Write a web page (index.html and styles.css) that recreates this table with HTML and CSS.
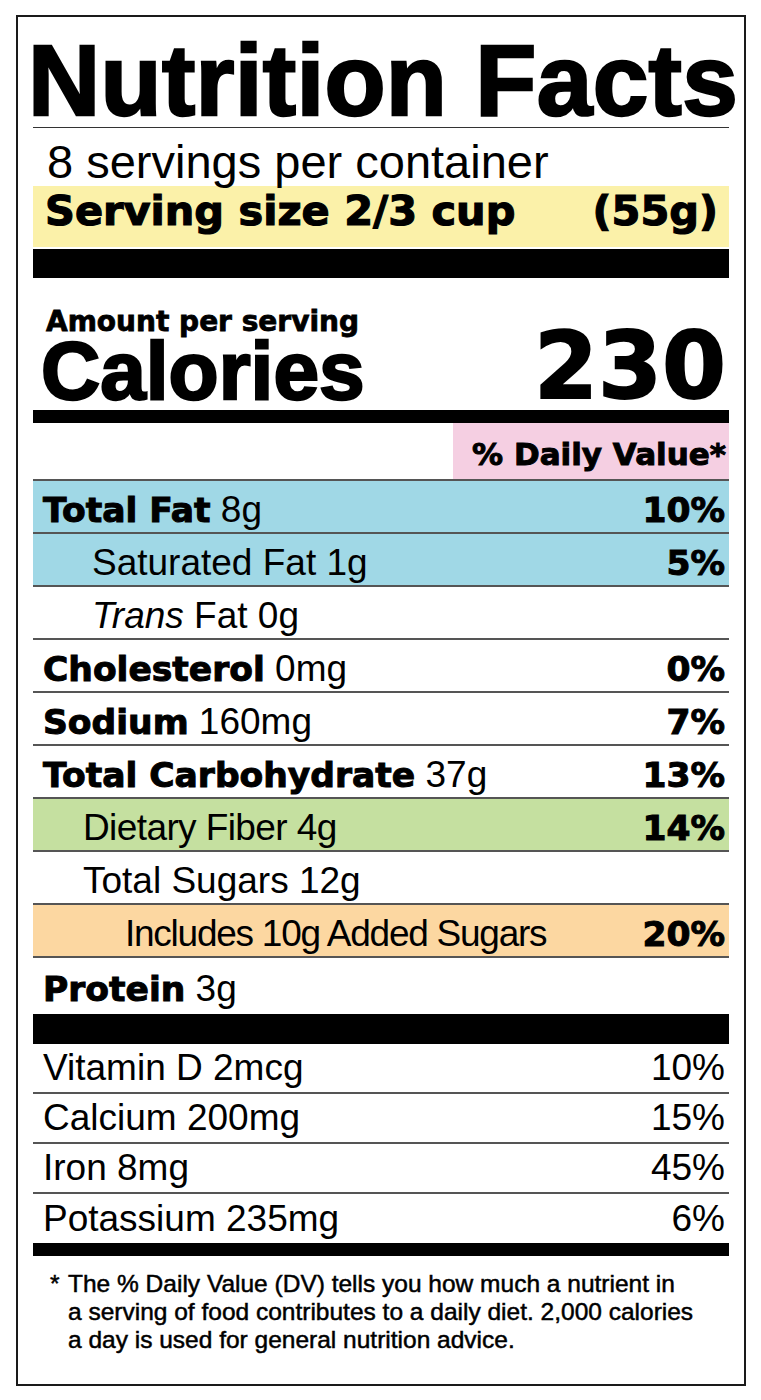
FILE: index.html
```html
<!DOCTYPE html>
<html lang="en">
<head>
<meta charset="utf-8">
<title>Nutrition Facts</title>
<link rel="stylesheet" href="styles.css">
</head>
<body>
<div class="label">
  <div class="title-wrap"><h1 class="title">Nutrition Facts</h1></div>
  <div class="servings">8 servings per container</div>
  <div class="serving-size"><span>Serving size 2/3 cup</span><span>(55g)</span></div>
  <div class="bar bar-thick"></div>
  <div class="calories">
    <div class="cal-left">
      <div class="amount">Amount per serving</div>
      <div class="cal-label">Calories</div>
    </div>
    <div class="cal-value">230</div>
  </div>
  <div class="bar bar-medium"></div>
  <div class="dv-head"><span class="dv-box">% Daily Value*</span></div>

  <div class="row blue"><span class="name"><b>Total Fat</b> 8g</span><b class="pct">10%</b></div>
  <div class="row blue sub-fat"><span class="name">Saturated Fat 1g</span><b class="pct">5%</b></div>
  <div class="row sub-fat"><span class="name"><i>Trans</i> Fat 0g</span></div>
  <div class="row"><span class="name"><b>Cholesterol</b> 0mg</span><b class="pct">0%</b></div>
  <div class="row"><span class="name"><b>Sodium</b> 160mg</span><b class="pct">7%</b></div>
  <div class="row"><span class="name"><b>Total Carbohydrate</b> 37g</span><b class="pct">13%</b></div>
  <div class="row green sub-carb"><span class="name tight">Dietary Fiber 4g</span><b class="pct">14%</b></div>
  <div class="row sub-carb"><span class="name">Total Sugars 12g</span></div>
  <div class="row orange sub-added"><span class="name tighter">Includes 10g Added Sugars</span><b class="pct">20%</b></div>
  <div class="row row-last"><span class="name"><b>Protein</b> 3g</span></div>

  <div class="bar bar-thick2"></div>

  <div class="vrow"><span>Vitamin D 2mcg</span><span>10%</span></div>
  <div class="vrow"><span>Calcium 200mg</span><span>15%</span></div>
  <div class="vrow"><span>Iron 8mg</span><span>45%</span></div>
  <div class="vrow vrow-last"><span>Potassium 235mg</span><span>6%</span></div>

  <div class="bar bar-medium"></div>

  <div class="footnote">
    <span class="star">*</span>
    <p class="note">The % Daily Value (DV) tells you how much a nutrient in<br>a serving of food contributes to a daily diet. 2,000 calories<br>a day is used for general nutrition advice.</p>
  </div>
</div>
</body>
</html>
```

FILE: styles.css
```css
html, body {
  margin: 0;
  padding: 0;
  background: #ffffff;
}

.label {
  box-sizing: border-box;
  margin: 15px 0 0 16px;
  width: 730px;
  height: 1371px;
  border: 2px solid #1a1a1a;
  padding: 0 15px;
  font-family: "Liberation Sans", Arial, sans-serif;
  color: #000;
}

.title-wrap {
  border-bottom: 1px solid #333;
  padding-top: 16px;
}

.title {
  margin: 0 0 0 -5px;
  font-family: "Liberation Sans", Arial, sans-serif;
  font-weight: 700;
  font-size: 100px;
  line-height: 94px;
  height: 94px;
  letter-spacing: 0.3px;
  white-space: nowrap;
  -webkit-text-stroke: 2.4px #000;
}

.servings {
  height: 58px;
  font-size: 47px;
  line-height: 68px;
  padding-left: 14px;
  white-space: nowrap;
}

.serving-size {
  display: flex;
  justify-content: space-between;
  height: 61px;
  padding: 0 11px 0 12px;
  background: #fbf1a9;
  font-family: "DejaVu Sans", sans-serif;
  font-weight: 700;
  font-size: 41.5px;
  line-height: 50px;
  white-space: nowrap;
  -webkit-text-stroke: 1.2px #000;
}

.bar {
  background: #000;
}

.bar-thick {
  height: 29px;
  margin-top: 2px;
}

.bar-medium {
  height: 13px;
}

.bar-thick2 {
  height: 30px;
}

.calories {
  display: flex;
  justify-content: space-between;
  align-items: flex-end;
  height: 132px;
  box-sizing: border-box;
  padding: 31px 3px 3px 8px;
}

.amount {
  margin-left: 5px;
  font-family: "DejaVu Sans", sans-serif;
  font-weight: 700;
  font-size: 28px;
  line-height: 26px;
  white-space: nowrap;
  -webkit-text-stroke: 0.8px #000;
}

.cal-label {
  font-weight: 700;
  font-size: 82px;
  line-height: 72px;
  -webkit-text-stroke: 2.4px #000;
  white-space: nowrap;
}

.cal-value {
  font-family: "DejaVu Sans", sans-serif;
  font-weight: 700;
  font-size: 92px;
  line-height: 80px;
  -webkit-text-stroke: 1.8px #000;
}

.dv-head {
  display: flex;
  justify-content: flex-end;
  height: 58px;
  box-sizing: border-box;
  border-bottom: 2px solid #555;
}

.dv-box {
  box-sizing: border-box;
  width: 276px;
  height: 56px;
  padding: 6px 3px 0 0;
  background: #f5cfe2;
  text-align: right;
  font-family: "DejaVu Sans", sans-serif;
  font-weight: 700;
  font-size: 31px;
  line-height: 50px;
  white-space: nowrap;
  -webkit-text-stroke: 1px #000;
}

.row {
  display: flex;
  justify-content: space-between;
  align-items: center;
  box-sizing: border-box;
  height: 53px;
  padding: 6px 4px 0 10px;
  border-bottom: 2px solid #555;
  font-size: 37px;
  white-space: nowrap;
}

.row b {
  font-family: "DejaVu Sans", sans-serif;
  font-weight: 700;
  font-size: 34.5px;
  -webkit-text-stroke: 1px #000;
}

.row i {
  font-style: italic;
}

.tight {
  letter-spacing: -0.6px;
}

.tighter {
  letter-spacing: -1.25px;
}

.row-last {
  height: 56px;
  border-bottom: none;
}

.sub-fat {
  padding-left: 59px;
}

.sub-carb {
  padding-left: 50px;
}

.sub-added {
  padding-left: 92px;
}

.blue {
  background: #a0d8e6;
}

.green {
  background: #c5e0a0;
}

.orange {
  background: #fcd7a1;
}

.vrow {
  display: flex;
  justify-content: space-between;
  align-items: center;
  box-sizing: border-box;
  height: 50px;
  padding: 0 4px 0 10px;
  border-bottom: 2px solid #555;
  font-size: 37px;
  white-space: nowrap;
}

.vrow-last {
  border-bottom: none;
  height: 49px;
}

.footnote {
  display: flex;
  padding: 14px 0 0 17px;
  font-size: 24.5px;
  line-height: 28px;
  -webkit-text-stroke: 0.5px #000;
}

.star {
  width: 18px;
  flex: none;
}

.note {
  margin: 0;
  white-space: nowrap;
}
```
